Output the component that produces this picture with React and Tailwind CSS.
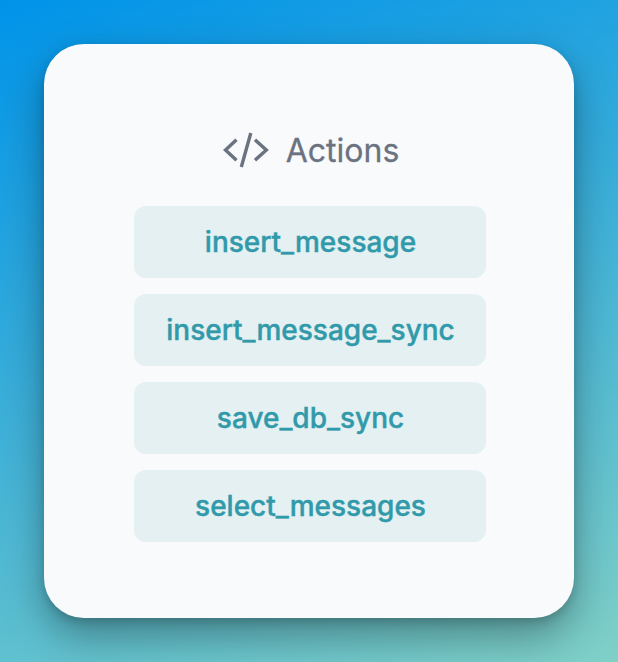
const actions = ["insert_message", "insert_message_sync", "save_db_sync", "select_messages"];

export default function App() {
  return (
    <main className="h-[662px] w-[618px] bg-[linear-gradient(160deg,#0093e9_0%,#80d0c7_100%)] p-11 font-['Inter',sans-serif]">
      <section className="flex h-[574px] w-[530px] flex-col items-center rounded-[40px] bg-[#f9fafc] pt-[83px] pl-0.5 shadow-[0_18px_42px_rgba(0,0,0,0.34),0_4px_10px_rgba(0,0,0,0.16)]">
        <h1 className="flex h-[48px] items-center gap-[17px] pl-px text-[32px] font-normal text-[#6b7280] [-webkit-text-stroke:0.3px_currentColor]">
          <svg className="-mt-0.5 h-[36px] w-[47px]" viewBox="0 0 47 36" fill="none" stroke="currentColor" strokeWidth="3.4" aria-hidden="true">
            <path d="M14.5 7.8 3.5 18l11 10.2M33 7.8 44.3 18 33 28.2M28.8 1l-9.5 34" />
          </svg>
          Actions
        </h1>
        <ul className="mt-[31px] flex w-[352px] flex-col gap-4">
          {actions.map((action) => (
            <li key={action} className="flex h-[72px] items-center justify-center rounded-xl bg-[#e4f0f2] pl-px text-[28px] font-medium text-[#319aaa] [-webkit-text-stroke:0.4px_currentColor]">
              {action}
            </li>
          ))}
        </ul>
      </section>
    </main>
  );
}
